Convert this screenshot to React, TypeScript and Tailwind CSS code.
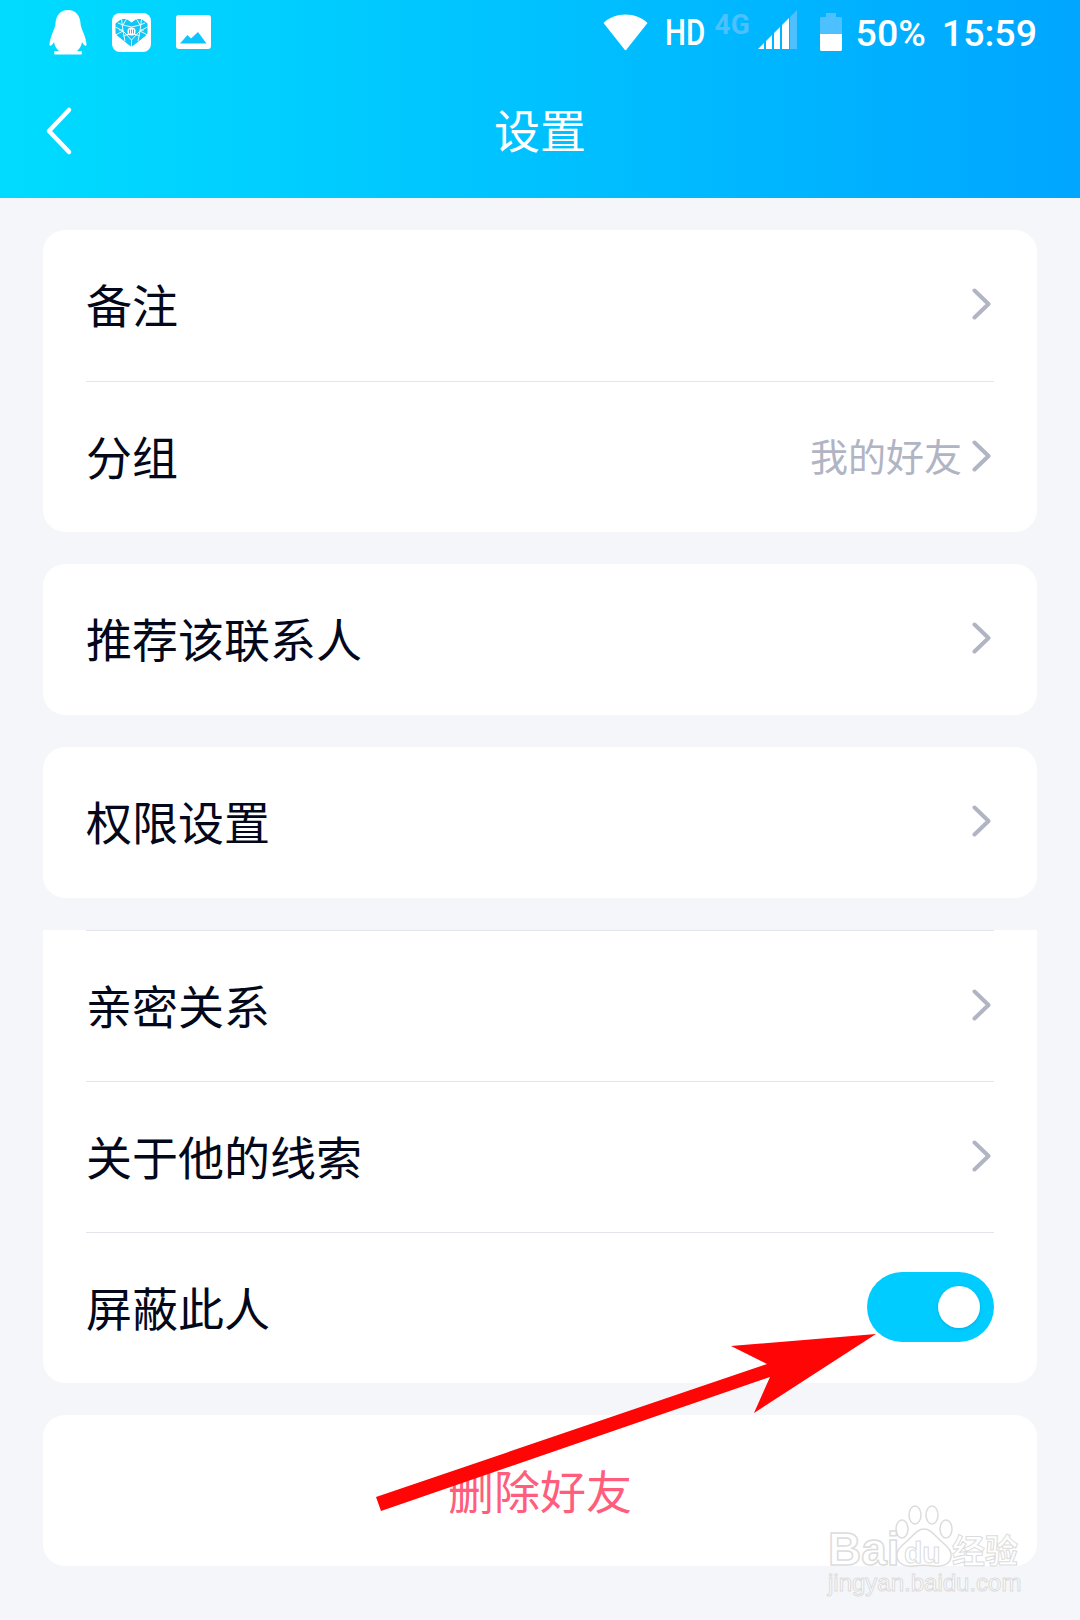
import React from "react";

const CJK = "font-['Noto_Sans_CJK_SC','Noto_Sans',sans-serif]";

function Chevron() {
  return (
    <svg width="20" height="32" viewBox="0 0 20 32" className="shrink-0">
      <path d="M2.5 2.5 L16.5 16 L2.5 29.5" fill="none" stroke="#b1b4c3" strokeWidth="4" strokeLinecap="round" strokeLinejoin="round" />
    </svg>
  );
}

function Row({ label, value, divider, children }: { label: string; value?: string; divider?: boolean; children?: React.ReactNode }) {
  return (
    <div className={`flex h-[151px] items-center justify-between pb-[3px] ${divider ? "border-t border-[#e4e5ea]" : ""}`}>
      <span className="pb-[2px] text-[46px] leading-none text-[#03081a]">{label}</span>
      {children ?? (
        <div className="flex items-center gap-[10px] pr-[2px]">
          {value ? <span className="pb-[2px] text-[38px] leading-none text-[#b1b4c3]">{value}</span> : null}
          <Chevron />
        </div>
      )}
    </div>
  );
}

function StatusLeft() {
  return (
    <div className="flex items-center">
      {/* penguin */}
      <svg width="38" height="45" viewBox="0 0 38 45" className="ml-[49px]">
        <path
          fill="#fff"
          d="M19 0C11 0 7 6 6.500 13C6.300 16 5.500 18 3.500 23C1.500 28 .5 32 .5 35L1 36C3 35 4.500 33.500 5 32C5.500 36 7.500 39 10 41H5.500C5 42 5 44 5.500 44.500H32.500C33 44 33 42 32.500 41H28C30.500 39 32.500 36 33 32C33.500 33.500 35 35 37 36L37.500 35C37.500 32 36.500 28 34.500 23C32.500 18 31.700 16 31.500 13C31 6 27 0 19 0Z"
        />
      </svg>
      {/* heart */}
      <svg width="39" height="39" viewBox="0 0 39 39" className="ml-[25px]">
        <rect width="39" height="39" rx="8" fill="#fff" />
        <path
          fill="#12c6f5"
          d="M19.500 34L5 22.500C3.800 21.500 3.500 20.500 3.500 19V10.500L9.500 6H14.500L19.500 9.500L24.500 6H29.500L35.500 10.500V19C35.500 20.500 35.200 21.500 34 22.500Z"
        />
        <path
          fill="none"
          stroke="#fff"
          strokeWidth=".9"
          d="M3.500 14L11 18L3.500 22M35.500 14L28 18L35.500 22M9.500 6L11 18L19.500 27L28 18L29.500 6M14.500 6L11 12L19.500 14L28 12L24.500 6M19.500 27V34M11 18L13 28M28 18L26 28M6 10L11 12M33 10L28 12M7 17H11M28 17H32M11 23L17 21M28 23L22 21"
        />
        <rect x="15.500" y="14.500" width="8" height="8" rx="3.500" fill="#fff" />
        <path d="M17.500 16.500V20.500M19.500 16.500V20.500M21.500 16.500V20.500" stroke="#12c6f5" strokeWidth="1" />
      </svg>
      {/* picture */}
      <svg width="35" height="34" viewBox="0 0 35 34" className="ml-[25px]">
        <rect width="35" height="34" rx="3" fill="#fff" />
        <path fill="#0cc4ff" d="M4 28.500L11.500 20L15 23.500L22 17L30.500 28.500Z" />
      </svg>
    </div>
  );
}

function StatusRight() {
  return (
    <div className="flex items-center font-['Roboto',sans-serif] text-white">
      <svg width="45" height="37" viewBox="0 0 45 37">
        <path fill="#fff" d="M.5 9C6 3.500 14 .5 22.500 .5S39 3.500 44.500 9L23.500 35.500C23 36.500 22 36.500 21.500 35.500Z" />
      </svg>
      <span className="ml-[17px] w-[41px] origin-left scale-x-[0.82] pt-[2px] text-[36px] font-medium leading-none">HD</span>
      <div className="relative h-[50px] w-[92px]">
        <span className="absolute left-[9px] top-[4px] text-[28px] font-bold leading-none text-[#4dc0ff]">4G</span>
        <svg width="40" height="40" viewBox="0 0 40 40" className="absolute bottom-[7px] left-[52px]">
          <path fill="#4dc0ff" d="M32 7L39 0V39H32Z" />
          <path fill="#fff" d="M0 39L6 33V39ZM8 31L14 25V39H8ZM16 23L22 17V39H16ZM24 15L31 8V39H24Z" />
        </svg>
      </div>
      <svg width="22" height="38" viewBox="0 0 22 38" className="ml-[22px]">
        <path fill="#4dc0ff" d="M6 0H16V4H20.500C21.300 4 22 4.700 22 5.500V21H0V5.500C0 4.700 .7 4 1.500 4H6Z" />
        <path fill="#fff" d="M0 21H22V36.500C22 37.300 21.300 38 20.500 38H1.500C.7 38 0 37.300 0 36.500Z" />
      </svg>
      <span className="ml-[14px] pt-[3px] text-[37.500px] font-medium leading-none">50%</span>
      <span className="ml-[16px] pt-[3px] text-[37.500px] font-medium leading-none">15:59</span>
    </div>
  );
}

function Toggle() {
  return (
    <div className="flex h-[70px] w-[127px] items-center justify-end rounded-full bg-[#00ccff] pr-[14px]">
      <div className="h-[42px] w-[42px] rounded-full bg-white shadow-[0_1px_3px_rgba(0,120,170,0.35)]" />
    </div>
  );
}

export default function App() {
  return (
    <div className={`relative h-[1620px] w-[1080px] overflow-hidden bg-[#f4f6fa] ${CJK}`}>
      <header className="h-[198px] bg-gradient-to-r from-[#00dcff] to-[#00a6ff]">
        <div className="flex h-[64px] items-center justify-between pr-[43px]">
          <StatusLeft />
          <StatusRight />
        </div>
        <div className="relative flex h-[134px] items-center justify-center pb-[6px]">
          <svg width="30" height="50" viewBox="0 0 30 50" className="absolute left-[44px] top-[42px]">
            <path d="M25 4 L5 25 L25 46" fill="none" stroke="#fff" strokeWidth="4.500" strokeLinecap="round" strokeLinejoin="round" />
          </svg>
          <span className="text-[46px] leading-none text-white">设置</span>
        </div>
      </header>

      <main className="flex flex-col gap-[32px] px-[43px] pt-[32px]">
        <section className="rounded-[22px] bg-white px-[43px]">
          <Row label="备注" />
          <Row label="分组" value="我的好友" divider />
        </section>
        <section className="rounded-[22px] bg-white px-[43px]">
          <Row label="推荐该联系人" />
        </section>
        <section className="rounded-[22px] bg-white px-[43px]">
          <Row label="权限设置" />
        </section>
        <section className="rounded-b-[22px] bg-white px-[43px]">
          <Row label="亲密关系" divider />
          <Row label="关于他的线索" divider />
          <Row label="屏蔽此人" divider>
            <Toggle />
          </Row>
        </section>
        <section className="flex h-[151px] items-center justify-center rounded-[22px] bg-white pb-[4px]">
          <span className="text-[46px] leading-none text-[#ff5d7c]">删除好友</span>
        </section>
      </main>

      {/* red annotation arrow drawn over the screenshot */}
      <svg width="1080" height="1620" viewBox="0 0 1080 1620" className="pointer-events-none absolute left-0 top-0">
        <path
          fill="#ff0505"
          d="M876 1334L731 1346L767 1364L376 1497L381 1511L770 1377L754 1413Z"
        />
      </svg>

      {/* baidu watermark */}
      <div className="pointer-events-none absolute left-[828px] top-[1505px] h-[92px] w-[196px] font-['Liberation_Sans',sans-serif]">
        <svg width="60" height="63" viewBox="0 0 60 63" className="absolute left-[66px] top-0">
          <g fill="#fff" stroke="#dcdcdc" strokeWidth="1.500">
            <ellipse cx="8" cy="24" rx="6" ry="9" />
            <ellipse cx="21" cy="10" rx="6" ry="9" />
            <ellipse cx="38" cy="10" rx="6" ry="9" />
            <ellipse cx="52" cy="24" rx="6" ry="9" />
            <path d="M30 24C37 24 41 31 48 37C56 44 58 47 57 52C56 60 47 62 40 61C33 60 27 60 20 61C13 62 4 60 3 52C2 47 4 44 12 37C19 31 23 24 30 24Z" />
          </g>
        </svg>
        <span className="absolute left-0 top-[25px] text-[46px] font-bold leading-[38px] text-white [-webkit-text-stroke:1.5px_#dcdcdc]">Bai</span>
        <span className="absolute left-[76px] top-[33px] text-[30px] font-bold leading-none text-white [-webkit-text-stroke:1px_#dcdcdc]">du</span>
        <span className={`absolute left-[124px] top-[28px] text-[33px] font-bold leading-none text-white [-webkit-text-stroke:1px_#dcdcdc] ${CJK}`}>经验</span>
        <span className="absolute left-0 top-[67px] text-[24px] leading-[22px] text-white [-webkit-text-stroke:1px_#dcdcdc]">jingyan.baidu.com</span>
      </div>
    </div>
  );
}
